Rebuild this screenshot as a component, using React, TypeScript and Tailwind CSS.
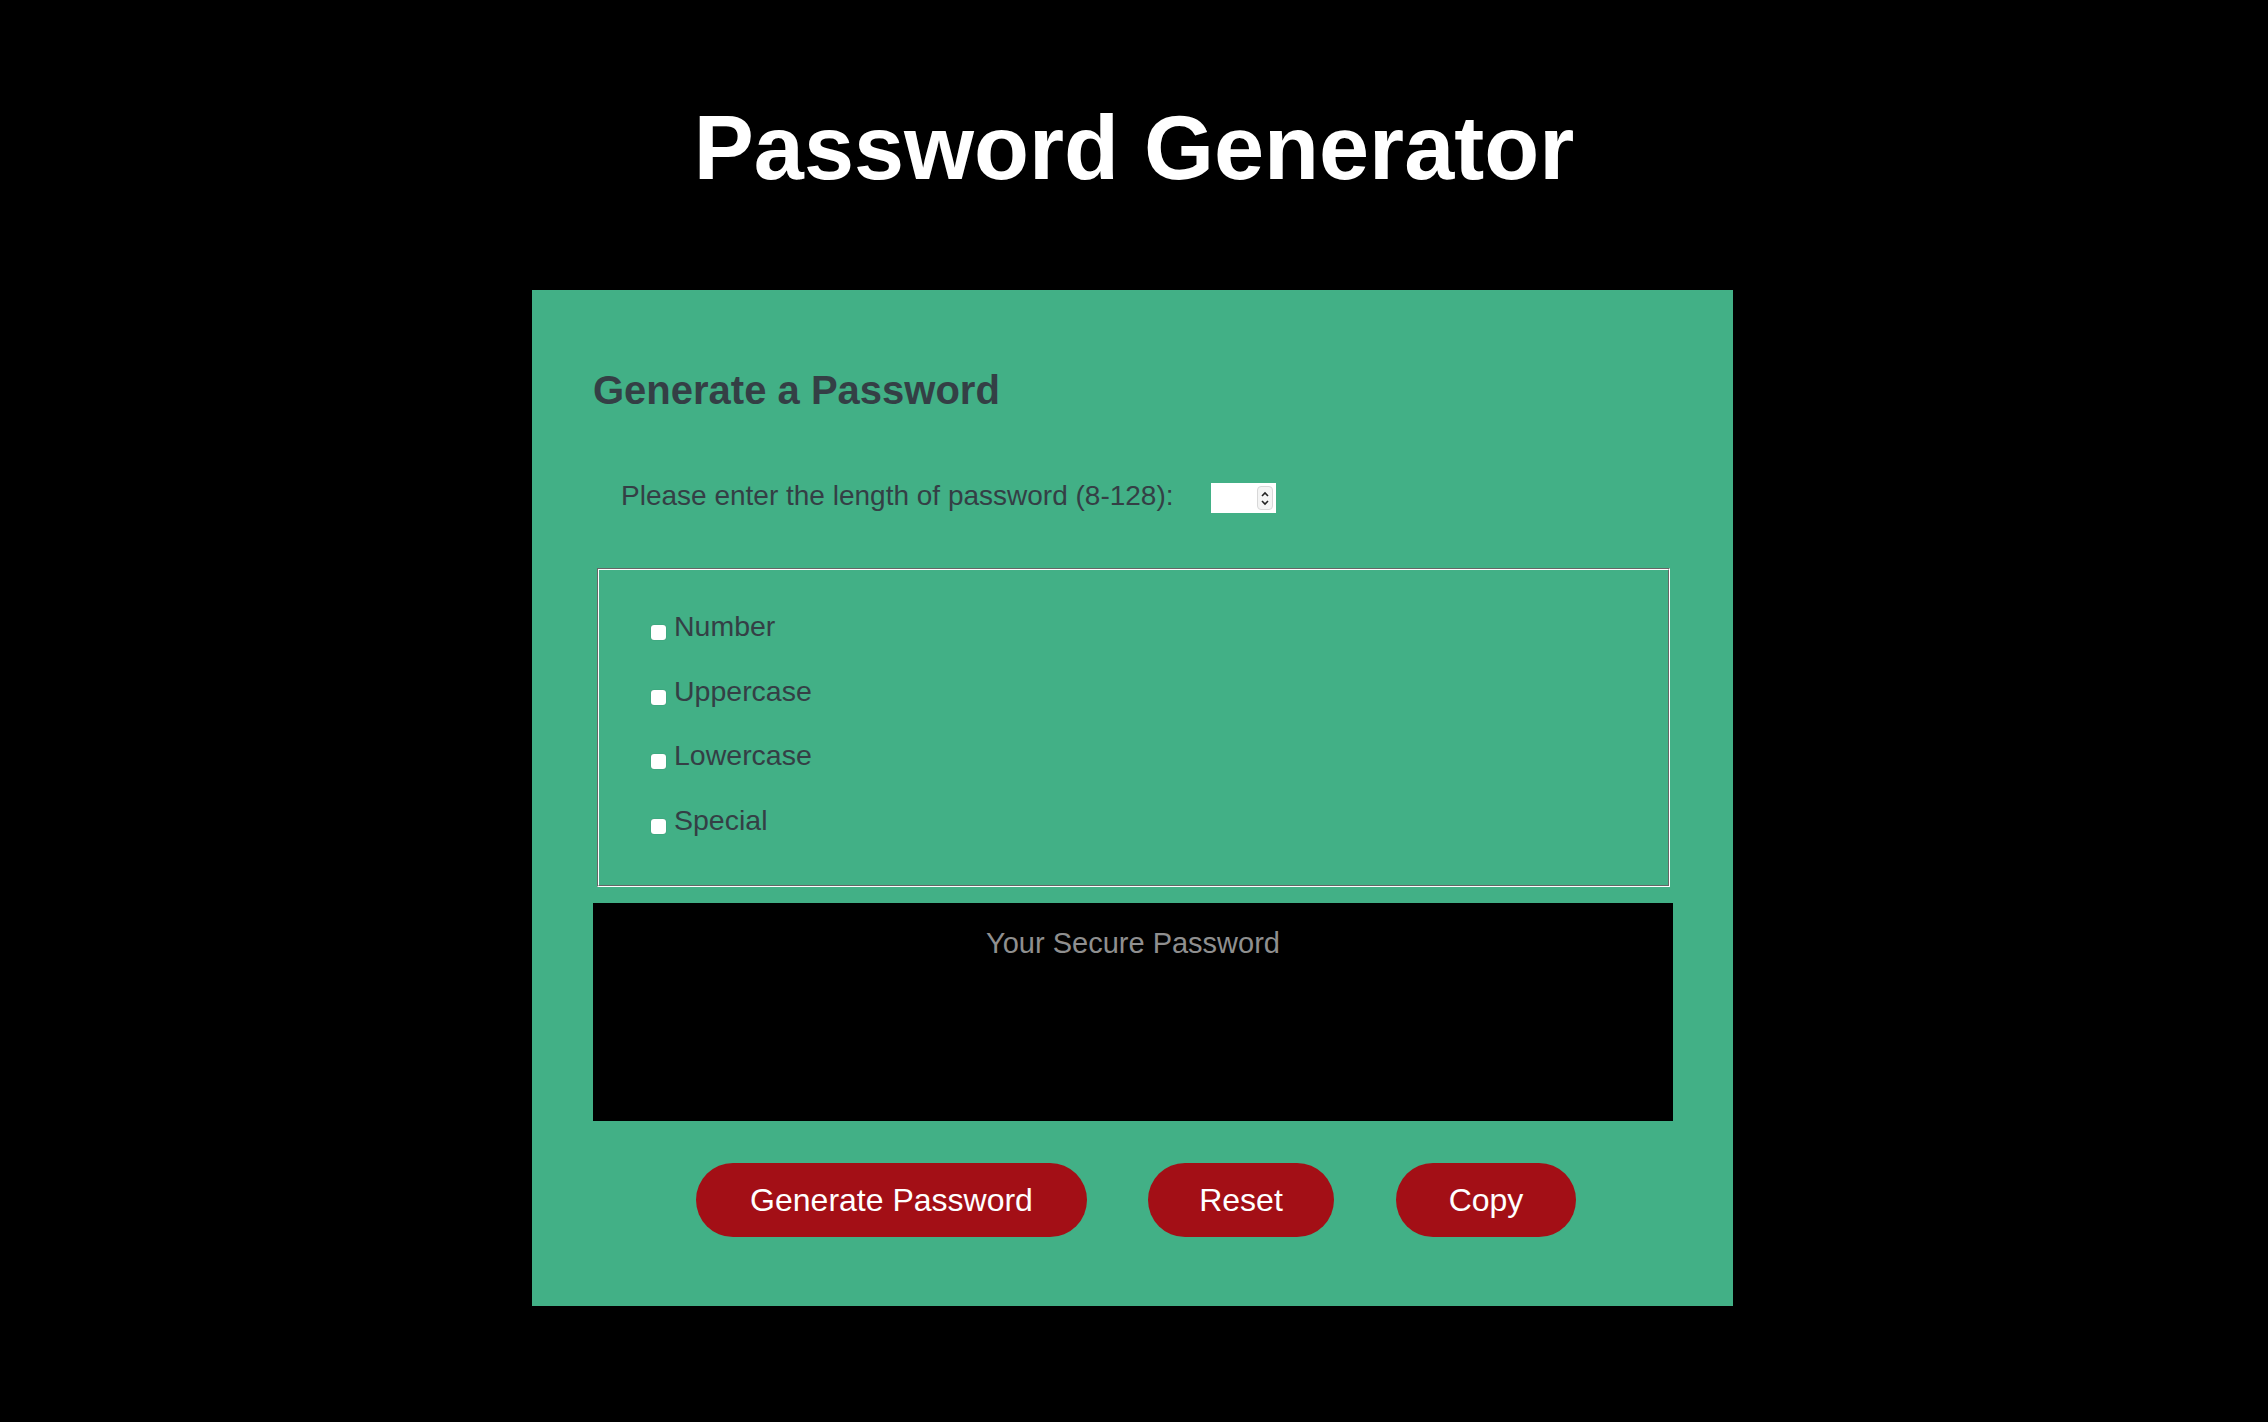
import React from "react";

const font = { fontFamily: '"Liberation Sans", Arial, sans-serif' };

function Check({ label }: { label: string }) {
  return (
    <label className="flex h-[28px] items-start">
      <span className="mt-[13px] block h-[15px] w-[15px] rounded-[3px] bg-white shadow-[0_0_1px_rgba(0,0,0,0.35)]" />
      <span className="ml-[8px] text-[28.5px] leading-none text-[#343f45]">{label}</span>
    </label>
  );
}

export default function App() {
  return (
    <div className="min-h-[1422px] w-full bg-black" style={font}>
      <h1 className="pt-[103px] text-center text-[90px] font-bold leading-none text-white">
        Password Generator
      </h1>
      <div className="ml-[532px] mt-[97px] h-[1016px] w-[1201px] bg-[#42b086] pl-[61px] pr-[60px] pt-[80px]">
        <h2 className="text-[40px] font-bold leading-none text-[#343f45]">Generate a Password</h2>
        <div className="ml-[28px] mt-[72px] flex items-start">
          <span className="text-[28px] leading-none text-[#343f45]">
            Please enter the length of password (8-128):
          </span>
          <div className="ml-[37px] mt-[1px] flex h-[30px] w-[65px] items-center justify-end bg-white pr-[3px]">
            <div className="flex h-[24px] w-[16px] flex-col items-center justify-center rounded-[4px] border border-[#d8d8d8] bg-[#f4f4f4]">
              <svg width="10" height="7" viewBox="0 0 10 7" className="mb-[1px]">
                <path d="M2 5 L5 2 L8 5" stroke="#222" strokeWidth="1.6" fill="none" />
              </svg>
              <svg width="10" height="7" viewBox="0 0 10 7">
                <path d="M2 2 L5 5 L8 2" stroke="#222" strokeWidth="1.6" fill="none" />
              </svg>
            </div>
          </div>
        </div>
        <div className="ml-[4px] mr-[3px] mt-[55px] border border-b-white border-l-[#666] border-r-white border-t-[#666]">
          <div className="border border-b-[#666] border-l-white border-r-[#666] border-t-white pb-[51px] pl-[52px] pt-[42px]">
            <div className="flex flex-col gap-[36.5px]">
              <Check label="Number" />
              <Check label="Uppercase" />
              <Check label="Lowercase" />
              <Check label="Special" />
            </div>
          </div>
        </div>
        <div className="mt-[16px] h-[218px] w-full bg-black pt-[26px] text-center text-[29px] leading-none text-[#8f8f8f]">
          Your Secure Password
        </div>
        <div className="mt-[42px] flex justify-center pl-[6px]">
          <button className="h-[74px] w-[391px] rounded-full bg-[#a30f16] text-[32px] text-white">
            Generate Password
          </button>
          <button className="ml-[61px] h-[74px] w-[186px] rounded-full bg-[#a30f16] text-[32px] text-white">
            Reset
          </button>
          <button className="ml-[62px] h-[74px] w-[180px] rounded-full bg-[#a30f16] text-[32px] text-white">
            Copy
          </button>
        </div>
      </div>
    </div>
  );
}
